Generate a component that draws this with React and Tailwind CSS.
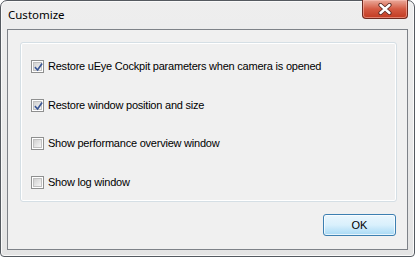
import React from "react";

function Check({ checked }) {
  return (
    <div className="w-[13px] h-[13px] border border-[#8e8f8f] bg-white p-[1px] shrink-0">
      <div className="w-full h-full border border-[#c0c0c0] bg-gradient-to-br from-[#d0d0d0] to-[#f6f6f6] relative">
        {checked && (
          <svg viewBox="0 0 9 9" className="absolute left-0 top-0 w-[9px] h-[9px]">
            <path d="M1.5 4.8 L3.6 7 L7.6 1.2" fill="none" stroke="#3a5694" strokeWidth="1.7" strokeLinecap="square" strokeLinejoin="miter" />
          </svg>
        )}
      </div>
    </div>
  );
}

function Row({ checked, label }) {
  return (
    <div className="flex items-center gap-[4px] h-[13px]">
      <Check checked={checked} />
      <span className="text-[11px] leading-[13px] tracking-[-0.22px] text-black">{label}</span>
    </div>
  );
}

export default function App() {
  return (
    <div className="w-[415px] h-[257px] bg-white" style={{ fontFamily: '"Liberation Sans", Arial, sans-serif' }}>
      <div className="w-[415px] h-[257px] border border-[#555a60] rounded-t-[7px] rounded-b-[4px] bg-gradient-to-b from-[#eeeeee] to-[#e4e4e4] shadow-[inset_0_0_0_1px_#fafafa] flex flex-col px-[6px] pb-[6px]">
        <div className="h-[28px] flex items-start shrink-0">
          <div
            className="pl-[1px] pt-[6px] text-[11.5px] text-black leading-[16px]"
            style={{ fontFamily: '"Noto Sans", "Open Sans", sans-serif' }}
          >
            Customize
          </div>
          <div className="flex-1" />
          <div className="w-[46px] h-[19px] -mt-[1px] rounded-b-[4px] border border-[#6e2a20] border-t-0 bg-gradient-to-b from-[#e9a99a] via-[#d45a43] to-[#c23a20] shadow-[inset_0_0_0_1px_rgba(255,200,190,0.5)] flex items-center justify-center">
            <svg viewBox="0 0 14 12" className="w-[14px] h-[12px]">
              <path d="M2.5 2 L11.5 10 M11.5 2 L2.5 10" stroke="#5a2a24" strokeWidth="4.2" strokeLinecap="round" />
              <path d="M2.5 2 L11.5 10 M11.5 2 L2.5 10" stroke="#ffffff" strokeWidth="2.4" strokeLinecap="round" />
            </svg>
          </div>
        </div>
        <div className="flex-1 border border-[#7e8288] bg-[#f0f0f0] flex flex-col pt-[12px] pl-[12px] pr-[10px]">
          <div className="h-[160px] border border-[#d5dfe5] rounded-[3px] shadow-[inset_0_0_0_1px_#ffffff] pl-[10px] pt-[17px] flex flex-col gap-[25.5px]">
            <Row checked label="Restore uEye Cockpit parameters when camera is opened" />
            <Row checked label="Restore window position and size" />
            <Row label="Show performance overview window" />
            <Row label="Show log window" />
          </div>
          <div className="flex justify-end pt-[12px] pr-[1px]">
            <div className="w-[73px] h-[22px] rounded-[3px] border border-[#3c7fb1] bg-gradient-to-b from-[#eaf6fd] via-[#d9f0fc] to-[#a7d9f5] shadow-[inset_0_0_0_1px_rgba(255,255,255,0.7)] flex items-center justify-center text-[11px] text-black">
              OK
            </div>
          </div>
        </div>
      </div>
    </div>
  );
}
